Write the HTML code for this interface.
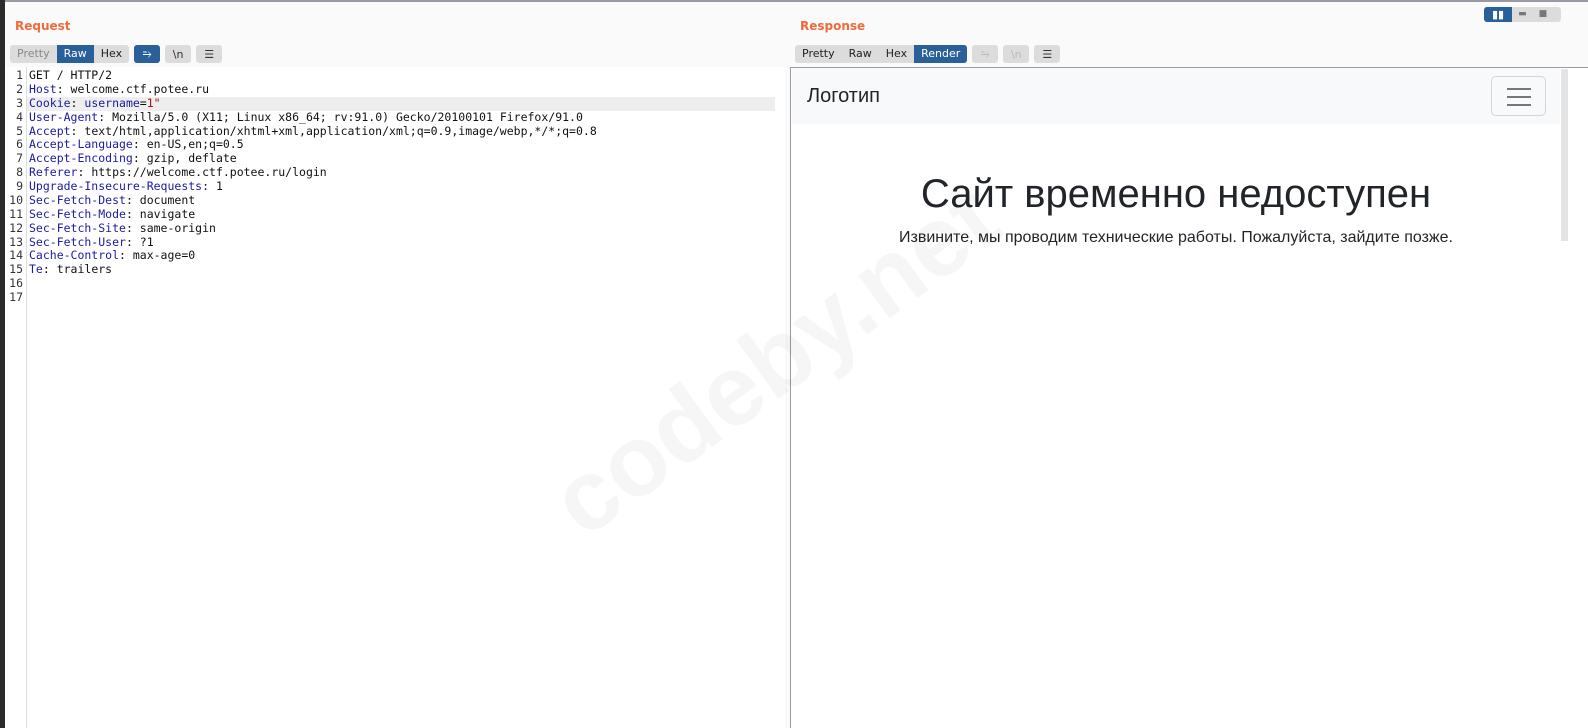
<!DOCTYPE html>
<html><head><meta charset="utf-8"><style>
*{margin:0;padding:0;box-sizing:border-box}
body{width:1588px;height:728px;background:#fafafa;position:relative;overflow:hidden;font-family:"DejaVu Sans","Liberation Sans",sans-serif}
.strip{position:absolute;left:0;top:0;width:5px;height:728px;background:#2b2b2b}
.topline{position:absolute;left:5px;top:0;right:0;height:2px;background:#9a9aa4}
.title{position:absolute;font-size:12px;font-weight:bold;color:#f06a3c}
.tb{position:absolute;display:flex;gap:5px;height:18px}
.grp{display:flex;background:#dcdcdc;border-radius:3px;overflow:hidden;font-size:11px;color:#222}
.grp span{padding:0 7px;line-height:18px}
.grp .on{background:#2a6099;color:#fff}
.btn{width:26px;height:18px;background:#dcdcdc;border-radius:3px;display:flex;align-items:center;justify-content:center;font-size:11px;color:#333}
.btn.on{background:#2a6099;color:#fff}
.editor{position:absolute;left:5px;top:67px;width:780px;height:661px;background:#fff}
.gut{position:absolute;left:26px;top:67px;width:1px;height:661px;background:#ddd}
.code{position:absolute;left:8px;top:69px;font-family:"DejaVu Sans Mono","Liberation Mono",monospace;font-size:11.5px;line-height:13.875px;color:#111;white-space:pre}
.code div{height:13.875px}
.n{display:inline-block;width:15px;text-align:right;color:#333;margin-right:6px}
.k{color:#1a1aa6}.r{color:#a31515}
.hl{position:absolute;left:27px;top:97px;width:748px;height:14px;background:#eee}
.resp{position:absolute;left:790px;top:67px;width:798px;height:661px;background:#fff;border-left:1px solid #9a9aa4;border-top:1px solid #9a9aa4}
.nav{position:absolute;left:792px;top:68px;width:768px;height:56px;background:#f8f9fa}
.logo{position:absolute;left:807px;top:85px;font-family:"Liberation Sans",sans-serif;font-size:20px;color:#212529}
.burger{position:absolute;left:1491px;top:76px;width:55px;height:40px;border:1px solid #d5d5d5;border-radius:5px}
.burger i{position:absolute;left:15px;width:24px;height:2px;background:#777}
h1{position:absolute;left:792px;width:768px;top:172px;text-align:center;font-family:"Liberation Sans",sans-serif;font-weight:normal;font-size:40px;color:#212529}
p{position:absolute;left:792px;width:768px;top:229px;text-align:center;font-family:"Liberation Sans",sans-serif;font-size:16px;color:#212529}
.scroll{position:absolute;left:1561px;top:69px;width:7px;height:172px;background:#e4e4e4}
.wm{position:absolute;left:775px;top:360px;width:0;height:0}
.wm span{position:absolute;left:0;top:0;transform:translate(-50%,-50%) rotate(-36deg);font-family:"Liberation Sans",sans-serif;font-weight:bold;font-size:100px;color:rgba(0,0,0,0.035);white-space:nowrap}
</style></head><body>
<div class="strip"></div><div class="topline"></div>
<div class="title" style="left:15px;top:19px">Request</div>
<div class="title" style="left:800px;top:19px">Response</div>
<div class="tb" style="left:10px;top:45px">
<div class="grp"><span style="color:#888">Pretty</span><span class="on">Raw</span><span>Hex</span></div>
<div class="btn on">⥱</div><div class="btn">\n</div><div class="btn">☰</div></div>
<div class="tb" style="left:795px;top:45px">
<div class="grp"><span>Pretty</span><span>Raw</span><span>Hex</span><span class="on">Render</span></div>
<div class="btn" style="color:#bbb">⥱</div><div class="btn" style="color:#bbb">\n</div><div class="btn">☰</div></div>
<div class="grp" style="position:absolute;left:1484px;top:7px;height:15px;width:77px">
<span class="on" style="line-height:15px;padding:0 8px">▮▮</span><span style="line-height:15px;padding:0 6px;color:#777;font-size:9px">▬</span><span style="line-height:15px;padding:0 6px;color:#777;font-size:9px">■</span></div>
<div class="editor"></div><div class="hl"></div><div class="gut"></div>
<div class="code"><div><span class="n">1</span>GET / HTTP/2</div><div><span class="n">2</span><span class="k">Host</span>: welcome.ctf.potee.ru</div><div><span class="n">3</span><span class="k">Cookie</span>: <span class="k">username</span>=<span class="r">1"</span></div><div><span class="n">4</span><span class="k">User-Agent</span>: Mozilla/5.0 (X11; Linux x86_64; rv:91.0) Gecko/20100101 Firefox/91.0</div><div><span class="n">5</span><span class="k">Accept</span>: text/html,application/xhtml+xml,application/xml;q=0.9,image/webp,*/*;q=0.8</div><div><span class="n">6</span><span class="k">Accept-Language</span>: en-US,en;q=0.5</div><div><span class="n">7</span><span class="k">Accept-Encoding</span>: gzip, deflate</div><div><span class="n">8</span><span class="k">Referer</span>: https://welcome.ctf.potee.ru/login</div><div><span class="n">9</span><span class="k">Upgrade-Insecure-Requests</span>: 1</div><div><span class="n">10</span><span class="k">Sec-Fetch-Dest</span>: document</div><div><span class="n">11</span><span class="k">Sec-Fetch-Mode</span>: navigate</div><div><span class="n">12</span><span class="k">Sec-Fetch-Site</span>: same-origin</div><div><span class="n">13</span><span class="k">Sec-Fetch-User</span>: ?1</div><div><span class="n">14</span><span class="k">Cache-Control</span>: max-age=0</div><div><span class="n">15</span><span class="k">Te</span>: trailers</div><div><span class="n">16</span></div><div><span class="n">17</span></div></div>
<div class="resp"></div><div class="nav"></div>
<div class="logo">Логотип</div>
<div class="burger"><i style="top:11px"></i><i style="top:19px"></i><i style="top:27px"></i></div>
<div class="scroll"></div>
<h1>Сайт временно недоступен</h1>
<p>Извините, мы проводим технические работы. Пожалуйста, зайдите позже.</p>
<div class="wm"><span>codeby.net</span></div>
</body></html>
